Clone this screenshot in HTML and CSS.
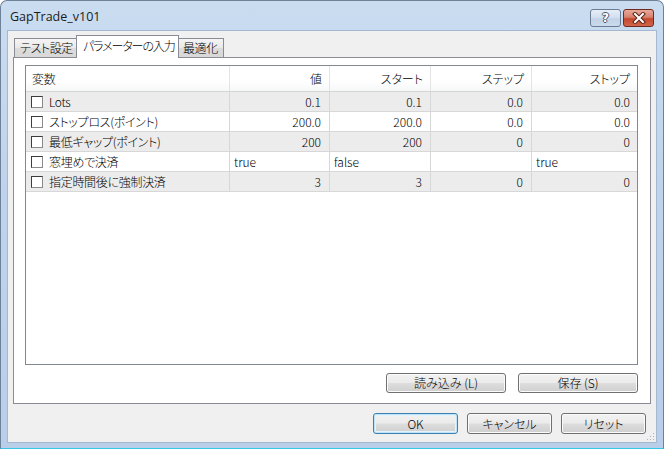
FILE: index.html
```html
<!DOCTYPE html>
<html lang="ja">
<head>
<meta charset="utf-8">
<title>GapTrade_v101</title>
<link rel="stylesheet" href="styles.css">
</head>
<body>
<div class="window">
  <div class="titlebar">
    <span class="title">GapTrade_v101</span>
    <div class="caption">
      <div class="cbtn help">?</div>
      <div class="cbtn close">
        <svg width="16" height="12" viewBox="0 0 16 12">
          <path d="M4 2 L12 10 M12 2 L4 10" stroke="#5a2418" stroke-width="4" stroke-linecap="square" fill="none"/>
          <path d="M4 2 L12 10 M12 2 L4 10" stroke="#ffffff" stroke-width="2" stroke-linecap="square" fill="none"/>
        </svg>
      </div>
    </div>
  </div>
  <div class="client">
    <div class="tabs">
      <div class="tab t1">テスト設定</div>
      <div class="tab active">パラメーターの入力</div>
      <div class="tab t3">最適化</div>
    </div>
    <div class="panel">
      <div class="list">
        <div class="row head">
          <div class="cell name">変数</div>
          <div class="cell">値</div>
          <div class="cell">スタート</div>
          <div class="cell">ステップ</div>
          <div class="cell">ストップ</div>
        </div>
        <div class="row alt">
          <div class="cell name"><span class="chk"></span>Lots</div>
          <div class="cell">0.1</div>
          <div class="cell">0.1</div>
          <div class="cell">0.0</div>
          <div class="cell">0.0</div>
        </div>
        <div class="row">
          <div class="cell name"><span class="chk"></span>ストップロス(ポイント)</div>
          <div class="cell">200.0</div>
          <div class="cell">200.0</div>
          <div class="cell">0.0</div>
          <div class="cell">0.0</div>
        </div>
        <div class="row alt">
          <div class="cell name"><span class="chk"></span>最低ギャップ(ポイント)</div>
          <div class="cell">200</div>
          <div class="cell">200</div>
          <div class="cell">0</div>
          <div class="cell">0</div>
        </div>
        <div class="row">
          <div class="cell name"><span class="chk"></span>窓埋めで決済</div>
          <div class="cell left">true</div>
          <div class="cell left">false</div>
          <div class="cell left"></div>
          <div class="cell left">true</div>
        </div>
        <div class="row alt">
          <div class="cell name"><span class="chk"></span>指定時間後に強制決済</div>
          <div class="cell">3</div>
          <div class="cell">3</div>
          <div class="cell">0</div>
          <div class="cell">0</div>
        </div>
      </div>
      <div class="panel-btns">
        <div class="btn wide">読み込み (L)</div>
        <div class="btn wide">保存 (S)</div>
      </div>
    </div>
    <div class="dialog-btns">
      <div class="btn def">OK</div>
      <div class="btn">キャンセル</div>
      <div class="btn">リセット</div>
    </div>
    <svg class="grip" width="8" height="8" viewBox="0 0 8 8">
      <rect x="6" y="0" width="1" height="1" fill="#a8b4c4"/>
      <rect x="3" y="3" width="1" height="1" fill="#a8b4c4"/>
      <rect x="6" y="3" width="1" height="1" fill="#a8b4c4"/>
      <rect x="0" y="6" width="1" height="1" fill="#a8b4c4"/>
      <rect x="3" y="6" width="1" height="1" fill="#a8b4c4"/>
      <rect x="6" y="6" width="1" height="1" fill="#a8b4c4"/>
    </svg>
  </div>
</div>
</body>
</html>
```

FILE: styles.css
```css
* { box-sizing: border-box; }

body {
  margin: 0;
  width: 664px;
  height: 449px;
  overflow: hidden;
  background: #ffffff;
  font-family: "Noto Sans CJK JP", "Liberation Sans", sans-serif;
  font-size: 12px;
  font-weight: 300;
  color: #000;
  font-feature-settings: "palt";
}

.window {
  width: 664px;
  height: 449px;
  border: 1px solid #6f8198;
  border-bottom: 1px solid #36c6e6;
  border-radius: 7px 7px 0 0;
  background: linear-gradient(#cadcf0, #bfd4ec 40%, #b9cfe9);
  display: flex;
  flex-direction: column;
}

.titlebar {
  height: 29px;
  display: flex;
  align-items: flex-start;
}

.title {
  padding: 7px 0 0 9px;
  font-family: "Open Sans", "Noto Sans", sans-serif;
  font-weight: 400;
  font-size: 12.5px;
  color: #1b1b1b;
}

.caption {
  margin-left: auto;
  margin-right: 9px;
  margin-top: 8px;
  display: flex;
  gap: 2px;
}

.cbtn {
  width: 31px;
  height: 18px;
  border: 1px solid #6a7c93;
  border-radius: 3px;
  display: flex;
  align-items: center;
  justify-content: center;
}

.help {
  background: linear-gradient(#e6eef8, #d3e0ef 45%, #c3d3e7 55%, #cbdaec);
  font-family: "DejaVu Sans", sans-serif;
  font-weight: bold;
  font-size: 12px;
  color: #ffffff;
  text-shadow: 1px 0 0 #4a5a6e, -1px 0 0 #4a5a6e, 0 1px 0 #4a5a6e, 0 -1px 0 #4a5a6e;
  line-height: 16px;
}

.close {
  border-color: #6e2a1d;
  background: linear-gradient(#e9a99a, #d7816c 45%, #c4482e 55%, #d2664a);
}

.client {
  margin: 0 6px;
  height: 413px;
  background: #f0f0f0;
  border: 1px solid #a3b8d1;
  padding: 0 10px 0 5px;
  position: relative;
}

.tabs {
  height: 26px;
  display: flex;
  align-items: flex-end;
  padding-left: 1px;
}

.tab {
  height: 19px;
  border: 1px solid #898c95;
  border-bottom: none;
  background: linear-gradient(#f4f4f4, #e9e9e9 50%, #dcdcdc 51%, #d8d8d8);
  line-height: 17px;
  padding-left: 5px;
  white-space: nowrap;
  overflow: hidden;
  letter-spacing: -0.4px;
}

.t1 { width: 63px; margin-right: -1px; }
.t3 { width: 46px; margin-left: -1px; padding-left: 4px; }

.active {
  position: relative;
  z-index: 2;
  width: 103px;
  height: 23px;
  margin-bottom: -1px;
  background: #ffffff;
  padding-left: 6px;
  line-height: 20px;
  letter-spacing: -1.1px;
}

.panel {
  width: 638px;
  height: 347px;
  border: 1px solid #898c95;
  background: #ffffff;
  padding: 7px 12px 0 11px;
}

.list {
  width: 613px;
  height: 300px;
  border: 1px solid #828790;
  background: #ffffff;
}

.row {
  display: grid;
  grid-template-columns: 204px 100px 101px 101px 105px;
  height: 20px;
  border-bottom: 1px solid #d7d7d7;
}

.row.alt { background: #ececec; }

.row.head {
  height: 26px;
  border-bottom: 1px solid #d5d5d5;
  background: linear-gradient(#ffffff, #ffffff 60%, #f6f7f8);
}

.cell {
  border-right: 1px solid #d7d7d7;
  text-align: right;
  padding: 0 8px 0 4px;
  line-height: 19px;
  white-space: nowrap;
  overflow: hidden;
}

.cell:last-child { border-right: none; padding-right: 7px; }

.head .cell {
  line-height: 25px;
  border-right-color: #e4e4e4;
  padding-right: 7px;
}

.cell.name {
  text-align: left;
  padding-left: 5px;
  display: flex;
  align-items: center;
  letter-spacing: -0.3px;
}

.head .cell.name { padding-left: 6px; }

.cell.left { text-align: left; padding-left: 4px; }

.chk {
  width: 12px;
  height: 12px;
  margin-right: 6px;
  background: #ffffff;
  border-top: 1px solid #3c3c3c;
  border-left: 1px solid #3c3c3c;
  border-right: 1px solid #8a8a8a;
  border-bottom: 1px solid #8a8a8a;
  flex: none;
}

.panel-btns {
  display: flex;
  justify-content: flex-end;
  gap: 12px;
  margin-top: 8px;
}

.btn {
  width: 85px;
  height: 21px;
  border: 1px solid #707070;
  border-radius: 3px;
  background: linear-gradient(#f2f2f2, #ebebeb 48%, #dddddd 52%, #cfcfcf);
  box-shadow: inset 0 0 0 1px #fbfbfb;
  text-align: center;
  line-height: 19px;
  white-space: nowrap;
}

.btn.wide { width: 120px; height: 20px; line-height: 18px; }

.btn.def {
  border-color: #3c7fb1;
  box-shadow: inset 0 0 0 1px #bfe4f8, inset 0 0 0 2px #e4f3fb;
}

.dialog-btns {
  display: flex;
  justify-content: flex-end;
  gap: 9px;
  margin-top: 9px;
}

.grip {
  position: absolute;
  right: 1px;
  bottom: 1px;
}
```
